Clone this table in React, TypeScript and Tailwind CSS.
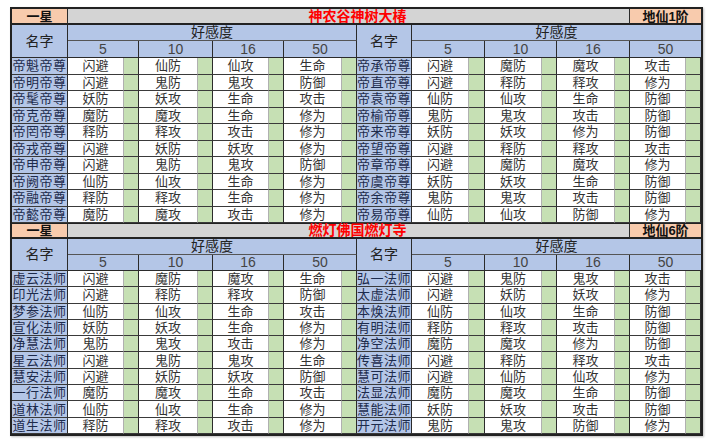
import { Fragment, type ReactNode } from "react";

type Row = [string, string, string, string, string];

type Section = {
  star: string;
  place: string;
  rank: string;
  left: Row[];
  right: Row[];
};

const SECTIONS: Section[] = [
  {
    star: "一星",
    place: "神农谷神树大椿",
    rank: "地仙1阶",
    left: [
      ["帝魁帝尊", "闪避", "仙防", "仙攻", "生命"],
      ["帝明帝尊", "闪避", "鬼防", "鬼攻", "防御"],
      ["帝髦帝尊", "妖防", "妖攻", "生命", "攻击"],
      ["帝克帝尊", "魔防", "魔攻", "生命", "修为"],
      ["帝罔帝尊", "释防", "释攻", "攻击", "修为"],
      ["帝戎帝尊", "闪避", "妖防", "妖攻", "修为"],
      ["帝申帝尊", "闪避", "鬼防", "鬼攻", "防御"],
      ["帝阙帝尊", "仙防", "仙攻", "生命", "修为"],
      ["帝融帝尊", "释防", "释攻", "生命", "修为"],
      ["帝懿帝尊", "魔防", "魔攻", "攻击", "修为"],
    ],
    right: [
      ["帝承帝尊", "闪避", "魔防", "魔攻", "攻击"],
      ["帝直帝尊", "闪避", "释防", "释攻", "修为"],
      ["帝袁帝尊", "仙防", "仙攻", "生命", "防御"],
      ["帝榆帝尊", "鬼防", "鬼攻", "攻击", "防御"],
      ["帝来帝尊", "妖防", "妖攻", "修为", "防御"],
      ["帝望帝尊", "闪避", "释防", "释攻", "攻击"],
      ["帝章帝尊", "闪避", "魔防", "魔攻", "修为"],
      ["帝虞帝尊", "妖防", "妖攻", "生命", "防御"],
      ["帝余帝尊", "鬼防", "鬼攻", "攻击", "防御"],
      ["帝易帝尊", "仙防", "仙攻", "防御", "修为"],
    ],
  },
  {
    star: "一星",
    place: "燃灯佛国燃灯寺",
    rank: "地仙6阶",
    left: [
      ["虚云法师", "闪避", "魔防", "魔攻", "生命"],
      ["印光法师", "闪避", "释防", "释攻", "防御"],
      ["梦参法师", "仙防", "仙攻", "生命", "攻击"],
      ["宣化法师", "妖防", "妖攻", "生命", "修为"],
      ["净慧法师", "鬼防", "鬼攻", "攻击", "修为"],
      ["星云法师", "闪避", "鬼防", "鬼攻", "生命"],
      ["慧安法师", "闪避", "妖防", "妖攻", "防御"],
      ["一行法师", "魔防", "魔攻", "生命", "攻击"],
      ["道林法师", "仙防", "仙攻", "生命", "修为"],
      ["道生法师", "释防", "释攻", "攻击", "修为"],
    ],
    right: [
      ["弘一法师", "闪避", "鬼防", "鬼攻", "攻击"],
      ["太虚法师", "闪避", "妖防", "妖攻", "修为"],
      ["本焕法师", "仙防", "仙攻", "生命", "防御"],
      ["有明法师", "释防", "释攻", "攻击", "防御"],
      ["净空法师", "魔防", "魔攻", "修为", "防御"],
      ["传喜法师", "闪避", "释防", "释攻", "攻击"],
      ["慧可法师", "闪避", "仙防", "仙攻", "修为"],
      ["法显法师", "魔防", "魔攻", "生命", "防御"],
      ["慧能法师", "妖防", "妖攻", "攻击", "防御"],
      ["开元法师", "鬼防", "鬼攻", "防御", "修为"],
    ],
  },
];

const LEVELS = ["5", "10", "16", "50"];

const FONT = "font-['Liberation_Sans','Noto_Sans_CJK_SC',sans-serif]";
const BLUE = "bg-[#b4c6e7]";
const GREEN = "bg-[#c6e0b4]";

function Cell({ className, children }: { className: string; children?: ReactNode }) {
  return (
    <div className={`flex min-h-0 items-center justify-center whitespace-nowrap leading-[13px] ${className}`}>
      {children}
    </div>
  );
}

function Half({ row }: { row: Row }) {
  const [name, ...vals] = row;
  const bottom = "border-b border-b-[#3a3a3a]";
  return (
    <>
      <Cell className={`${BLUE} ${bottom} border-r border-r-[#2b2b2b] text-[13px] tracking-[0.5px] text-[#1d2b4c]`}>{name}</Cell>
      {vals.map((v, i) => (
        <Fragment key={i}>
          <Cell className={`bg-white ${bottom} border-r border-r-[#b0b0b0] text-[13px] text-[#333]`}>{v}</Cell>
          <Cell className={`${GREEN} ${bottom} border-r border-r-[#2b2b2b]`} />
        </Fragment>
      ))}
    </>
  );
}

function Block({ section, first }: { section: Section; first: boolean }) {
  const top = first ? "" : "border-t border-t-[#222]";
  return (
    <>
      {/* title bar */}
      <Cell className={`${top} border-b-2 border-b-[#222] border-r border-r-[#2b2b2b] bg-[#f8cbad] text-[13px] font-bold text-[#111]`}>
        {section.star}
      </Cell>
      <Cell className={`col-span-15 ${top} border-b-2 border-b-[#222] border-r border-r-[#2b2b2b] bg-[#d4d4d4] pl-[18px] text-[14px] font-bold text-[#ff0000]`}>
        {section.place}
      </Cell>
      <Cell className={`col-span-2 ${top} border-b-2 border-b-[#222] bg-[#f8cbad] text-[13px] font-bold text-[#111]`}>
        {section.rank}
      </Cell>

      {/* headers */}
      {[0, 1].map((h) => (
        <Fragment key={h}>
          <Cell className={`row-span-2 ${BLUE} border-r border-b border-[#2b2b2b] text-[14px] text-[#222]`}>名字</Cell>
          <Cell className={`col-span-8 ${BLUE} border-b border-b-[#555] ${h === 0 ? "border-r border-r-[#2b2b2b]" : ""} text-[14px] text-[#222]`}>
            好感度
          </Cell>
        </Fragment>
      ))}
      {[0, 1].map((h) =>
        LEVELS.map((l, i) => (
          <Cell
            key={`${h}-${l}`}
            className={`col-span-2 ${BLUE} border-b border-b-[#2b2b2b] ${h === 1 && i === 3 ? "" : "border-r border-r-[#2b2b2b]"} text-[14px] text-[#444]`}
          >
            {l}
          </Cell>
        )),
      )}

      {/* rows */}
      {section.left.map((row, r) => (
        <Fragment key={r}>
          <Half row={row} />
          <Half row={section.right[r]} />
        </Fragment>
      ))}
    </>
  );
}

export default function App() {
  return (
    <div className={`h-[441px] w-[712px] bg-white pl-[10px] pt-[7px] ${FONT}`}>
      <div className="grid w-fit grid-cols-[56px_56px_15px_59px_15px_56px_15px_58px_15px_55px_57px_16px_57px_15px_58px_15px_56px_15px] grid-rows-[16px_16px_17px_repeat(10,16.5px)_16px_16px_16px_repeat(10,16.3px)] border-2 border-[#222] shadow-[1px_1px_2px_rgba(0,0,0,0.25)]">
        {SECTIONS.map((s, i) => (
          <Block key={s.place} section={s} first={i === 0} />
        ))}
      </div>
    </div>
  );
}
